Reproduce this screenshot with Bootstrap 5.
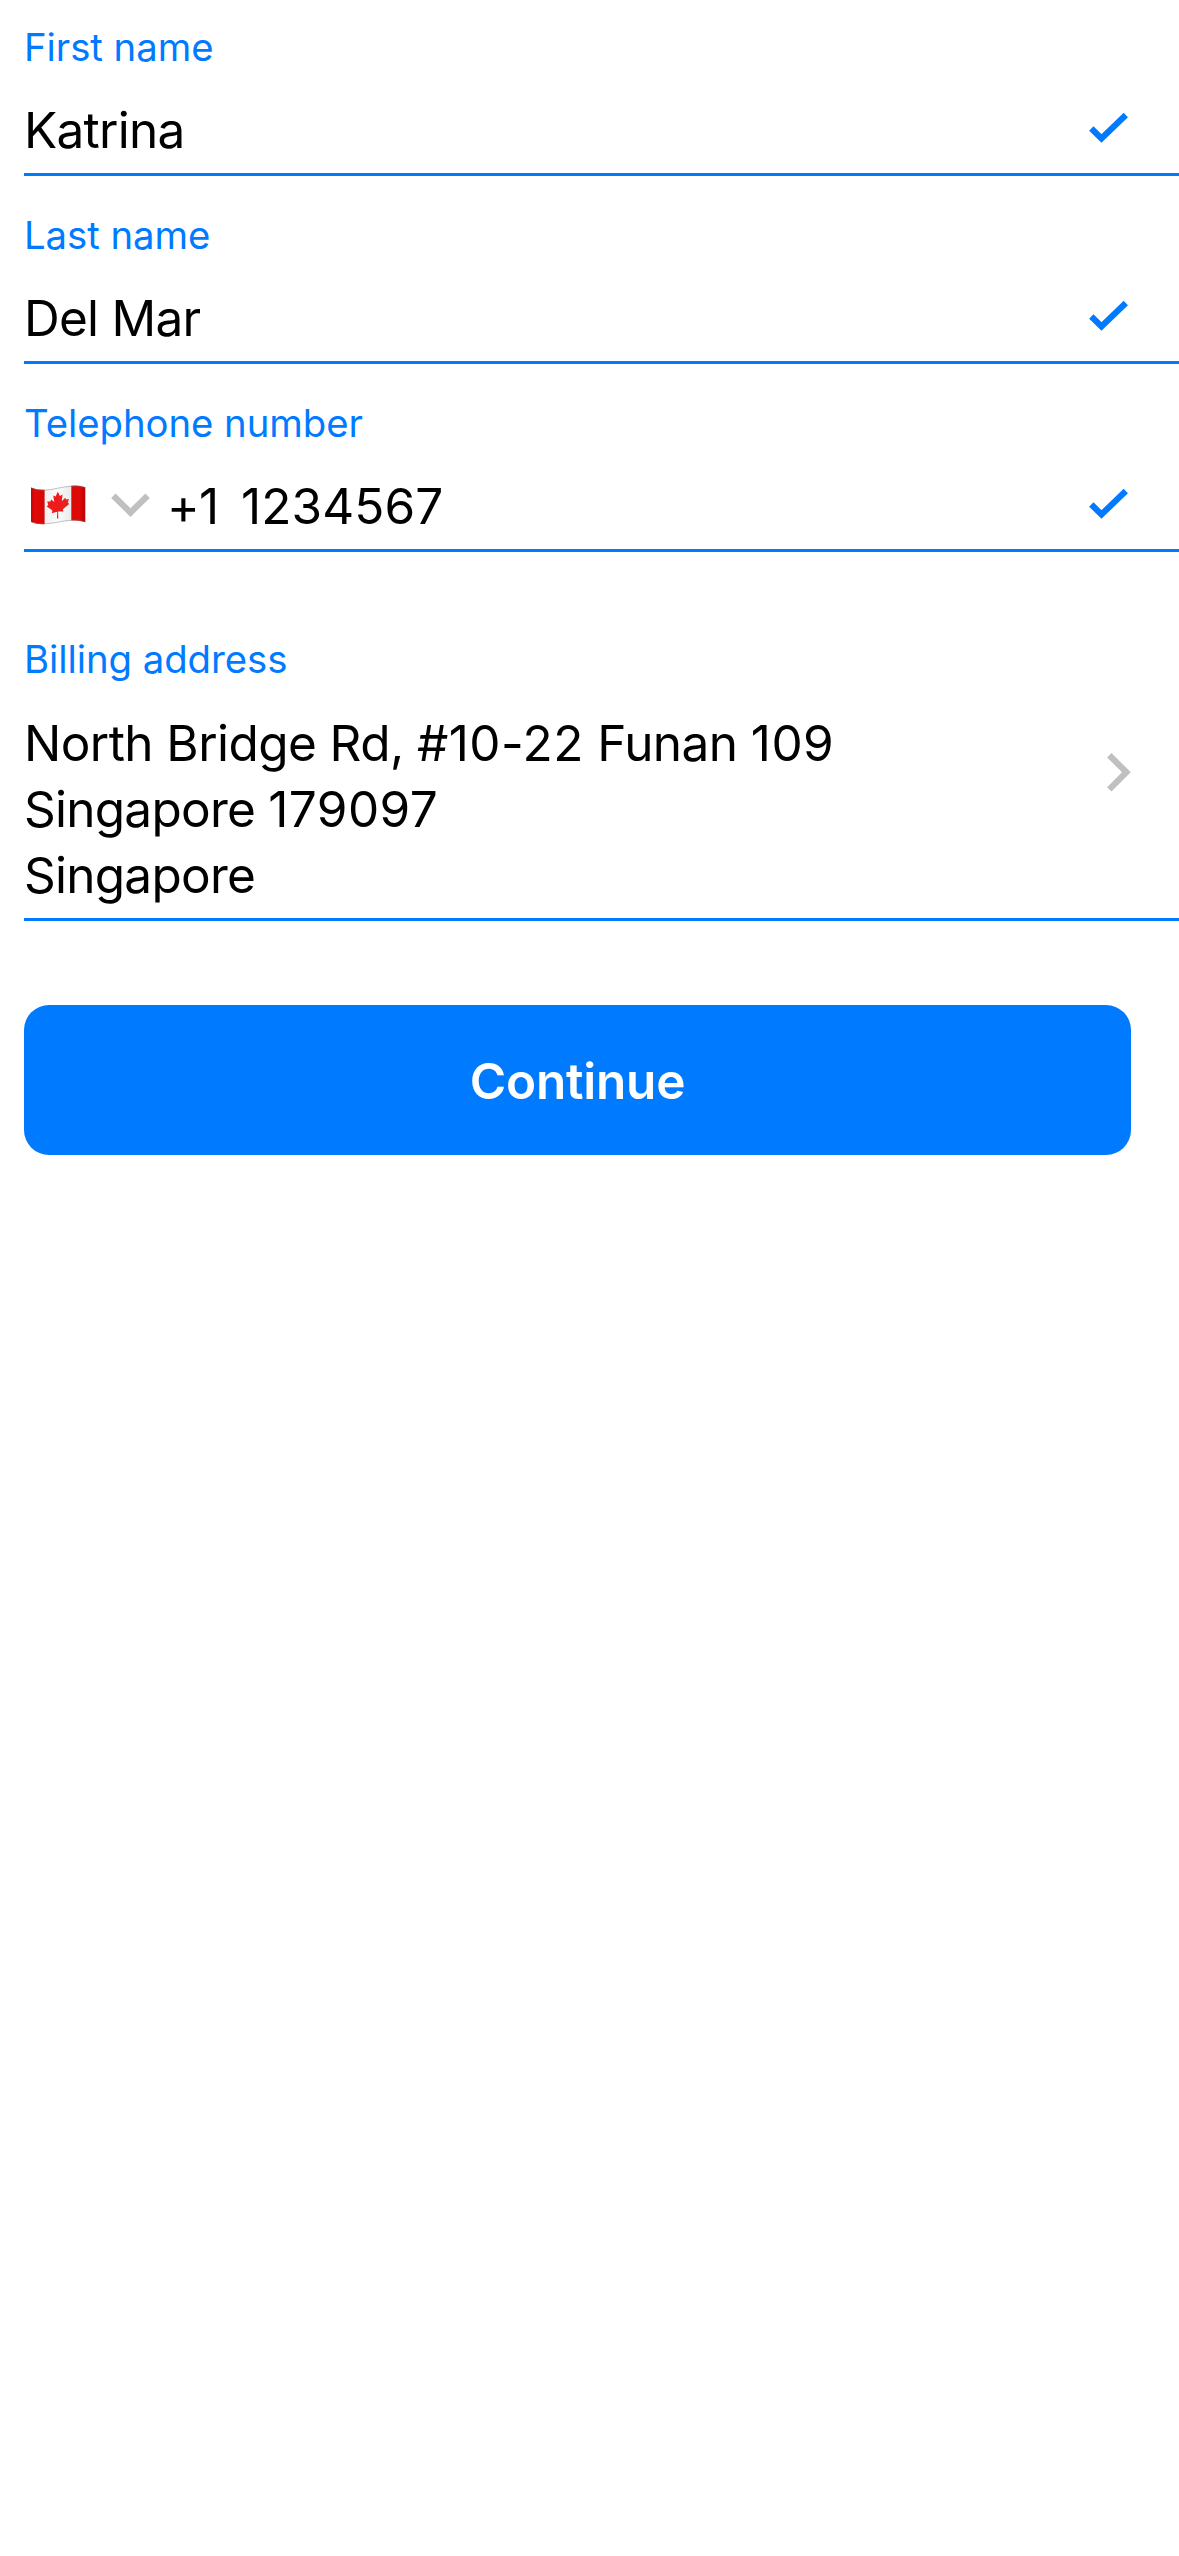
<!DOCTYPE html>
<html lang="en">
<head>
<meta charset="utf-8">
<meta name="viewport" content="width=device-width, initial-scale=1">
<title>Billing details</title>
<link href="https://cdn.jsdelivr.net/npm/bootstrap@5.3.0/dist/css/bootstrap.min.css" rel="stylesheet">
<style>
:root { --ios-blue: #007aff; --ios-gray: #c0c0c0; }
body { font-family: Inter, "Liberation Sans", sans-serif; color: #000; min-height: 2556px; font-size: 49.5px; }
.page-form { padding-left: 24px; }
.entry { border-bottom: 3px solid var(--ios-blue); padding-top: 24px; padding-right: 48px; margin-bottom: 12px; }
.entry-label { font-size: 38.3px; line-height: 47px; color: var(--ios-blue); letter-spacing: -.04px; }
.entry-row { height: 86px; margin-top: 16px; }
.entry-value { line-height: 86px; letter-spacing: -.75px; }
.entry-tall { margin-top: 60px; padding-bottom: 10px; }
.entry-address { line-height: 66px; margin-top: 27px; letter-spacing: -.75px; }
.street { letter-spacing: -.57px; }
.digits { letter-spacing: .45px; }
.phone-digits { letter-spacing: .1px; }
.tick { width: 45px; height: 86px; color: var(--ios-blue); }
.flag { width: 60px; height: 86px; }
.drop { width: 40px; height: 86px; margin-left: 26px; }
.chevron { color: var(--ios-gray); }
.dial { margin-left: 17px; width: 74px; }
.btn-continue { width: 1107px; height: 150px; margin-top: 84px; padding: 2px 0 0; border: 0; border-radius: 25px; background: var(--ios-blue); color: #fff; font-size: 49.5px; font-weight: 600; letter-spacing: -.2px; }
.btn-continue:hover { background: var(--ios-blue); color: #fff; }
</style>
</head>
<body class="bg-white m-0">
<form class="page-form d-flex flex-column">
  <div class="entry">
    <div class="entry-label">First name</div>
    <div class="entry-row d-flex justify-content-between">
      <span class="entry-value">Katrina</span>
      <svg class="tick" viewBox="1086 87 45 86" fill="none" stroke="currentColor" stroke-width="6.2"><path d="M1091.3 128.5L1101.5 138.5L1125.8 115"/></svg>
    </div>
  </div>
  <div class="entry">
    <div class="entry-label">Last name</div>
    <div class="entry-row d-flex justify-content-between">
      <span class="entry-value">Del Mar</span>
      <svg class="tick" viewBox="1086 87 45 86" fill="none" stroke="currentColor" stroke-width="6.2"><path d="M1091.3 128.5L1101.5 138.5L1125.8 115"/></svg>
    </div>
  </div>
  <div class="entry mb-0">
    <div class="entry-label">Telephone number</div>
    <div class="entry-row d-flex">
      <svg class="flag" viewBox="24 463 60 86" overflow="visible">
        <defs>
          <linearGradient id="redL"><stop offset="0" stop-color="#c40505"/><stop offset=".3" stop-color="#e30909"/><stop offset="1" stop-color="#d40606"/></linearGradient>
          <linearGradient id="redR"><stop offset="0" stop-color="#d90909"/><stop offset=".6" stop-color="#e00808"/><stop offset="1" stop-color="#b80404"/></linearGradient>
          <linearGradient id="cloth"><stop offset="0" stop-color="#f0f0f0"/><stop offset=".5" stop-color="#fbfbfb"/><stop offset="1" stop-color="#e9eaea"/></linearGradient>
        </defs>
        <path fill="url(#cloth)" d="M44 489.8C53 489.6 62 486.2 72 485.7V520.6C62 521 53 524.2 44 524.2Z"/>
        <path fill="url(#redL)" d="M31 487.6Q37 490.2 44.6 489.8V524.2Q37 524.6 31 522Z"/>
        <path fill="url(#redR)" d="M71.3 485.8Q79 485 85.3 487.2V522.2Q79 519.8 71.3 520.6Z"/>
        <path fill="none" stroke="#777" stroke-opacity=".55" stroke-width=".8" d="M31 488Q37 490.6 44 490.2C53 490 62 486.6 72 486.1Q79 485.4 85.3 487.6M31 521.7Q37 524.3 44 523.8C53 523.8 62 520.7 72 520.2Q79 519.5 85.3 521.8"/>
        <path fill="#ee1c1c" d="M57.8 491.8L60 496L62.6 494.6L61.8 501.3L65.2 497.8L66 499.6L69 499L67.8 502.6L69.2 503.9L62.8 509.2L63.5 511.6L58.1 511.5L58.3 518.4H57L57.2 511.8L51.7 513.2L52.4 510.5L46.8 506.4L48.2 504.8L47.2 501.6L50.4 501.4L51.2 499.5L54.3 502L53.2 495.6L55.6 496.4Z"/>
      </svg>
      <svg class="drop chevron" viewBox="110 463 40 86" fill="none" stroke="currentColor" stroke-width="6.2"><path d="M113.4 495.7L130.5 512.6L147.6 495.7"/></svg>
      <span class="entry-value dial">+1</span>
      <span class="entry-value phone-digits">1234567</span>
      <svg class="tick ms-auto" viewBox="1086 87 45 86" fill="none" stroke="currentColor" stroke-width="6.2"><path d="M1091.3 128.5L1101.5 138.5L1125.8 115"/></svg>
    </div>
  </div>
  <div class="entry entry-tall mb-0 d-flex justify-content-between">
    <div>
      <div class="entry-label">Billing address</div>
      <div class="entry-address"><span class="street">North Bridge Rd, <span class="digits">#10-22</span> Funan <span class="digits">109</span></span><br>Singapore <span class="digits">179097</span><br>Singapore</div>
    </div>
    <svg class="chevron align-self-start" width="30" height="269" viewBox="1101 636 30 269" fill="none" stroke="currentColor" stroke-width="6.2"><path d="M1109.3 755.2L1126.4 772.3L1109.3 789.4"/></svg>
  </div>
  <button type="button" class="btn btn-primary btn-continue">Continue</button>
</form>
<script src="https://cdn.jsdelivr.net/npm/bootstrap@5.3.0/dist/js/bootstrap.bundle.min.js"></script>
</body>
</html>
